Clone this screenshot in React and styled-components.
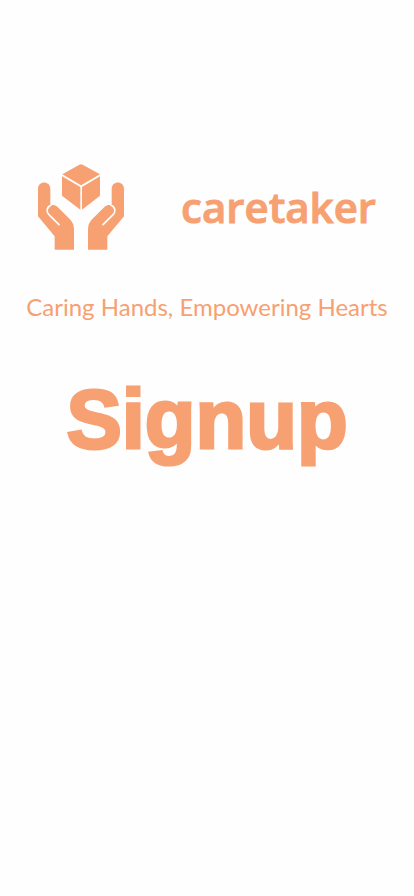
import React from "react";
import styled, { createGlobalStyle } from "styled-components";

const accent = "#f7a072";

const GlobalStyle = createGlobalStyle`
  *, *::before, *::after { box-sizing: border-box; }
  body { margin: 0; background: #fefefe; color: ${accent}; }
`;

const Page = styled.main`
  display: flex;
  flex-direction: column;
  align-items: center;
  min-height: 100vh;
  padding: 164px 28px 0;
`;

const Brand = styled.header`
  display: flex;
  align-items: center;
  justify-content: space-between;
  width: 100%;
  padding: 0 10px;
`;

const Logo = styled.svg`
  display: block;
  flex: none;
  width: 86px;
  height: 86px;
`;

const BrandName = styled.span`
  font: 600 42px/60px "Open Sans", sans-serif;
  -webkit-text-stroke: 1px ${accent};
`;

const Tagline = styled.p`
  margin: 41px 0 0;
  font: 400 24px/32px Lato, sans-serif;
  white-space: nowrap;
`;

const Title = styled.h1`
  margin: 49px 0 0;
  font: 700 83px/96px "Liberation Sans", Arial, sans-serif;
  -webkit-text-stroke: 3px ${accent};
`;

function Hand() {
  return (
    <>
      <path
        fill={accent}
        d="M24 104C24 78 61 78 61 104V153C69 151 76 152 82 157L119 194Q132 207 132 225V286H74V246L24 186Z"
      />
      <path
        fill="none"
        stroke="#fefefe"
        strokeWidth="5"
        strokeLinecap="round"
        d="M63 153C50 158 48 172 56 180L87 211"
      />
    </>
  );
}

function CareLogo() {
  return (
    <Logo viewBox="24 29 258 258" role="img" aria-label="Hands holding a box">
      <g fill={accent}>
        <path d="M148 31Q153 28 158 31L210 60L153 93L97 60Z" />
        <path d="M96 66L151 98V166L96 124Z" />
        <path d="M210 66L156 98V166L210 124Z" />
      </g>
      <Hand />
      <g transform="translate(306 0) scale(-1 1)">
        <Hand />
      </g>
    </Logo>
  );
}

export default function App() {
  return (
    <>
      <GlobalStyle />
      <Page>
        <Brand>
          <CareLogo />
          <BrandName>caretaker</BrandName>
        </Brand>
        <Tagline>Caring Hands, Empowering Hearts</Tagline>
        <Title>Signup</Title>
      </Page>
    </>
  );
}
